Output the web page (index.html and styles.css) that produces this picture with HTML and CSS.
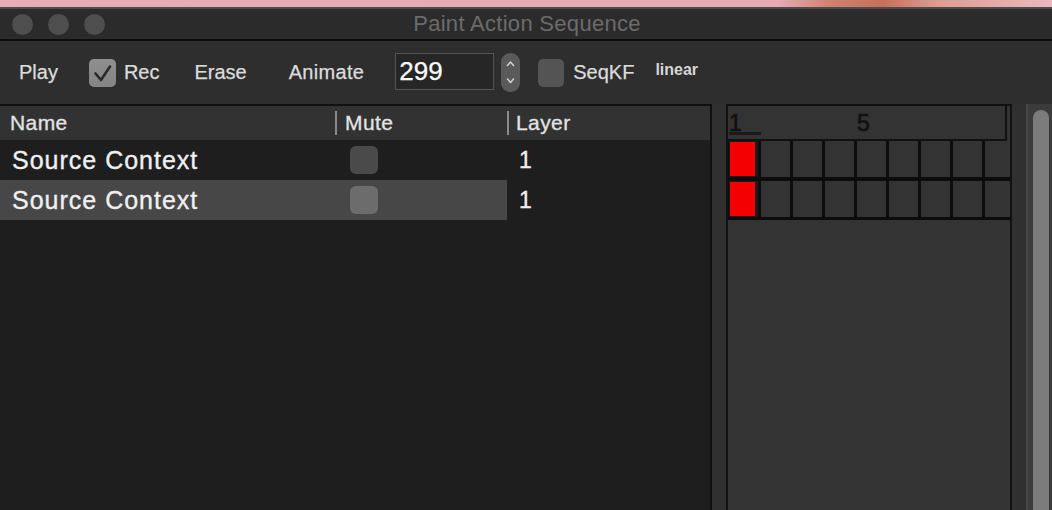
FILE: index.html
```html
<!DOCTYPE html>
<html>
<head>
<meta charset="utf-8">
<title>Paint Action Sequence</title>
<link rel="stylesheet" href="styles.css">
</head>
<body>
<div class="desk"></div>
<div class="window">
  <div class="titlebar">
    <div class="lights"><span class="light"></span><span class="light"></span><span class="light"></span></div>
    <div class="title">Paint Action Sequence</div>
    <div></div>
  </div>
  <div class="toolbar">
    <span class="tb-label play">Play</span>
    <span class="check rec-box"><svg width="27" height="28" viewBox="0 0 27 28"><path d="M6.5 14.5 L12 21 L21 7.5" fill="none" stroke="#2a2a2a" stroke-width="2.6" stroke-linecap="round" stroke-linejoin="round"/></svg></span>
    <span class="tb-label rec">Rec</span>
    <span class="tb-label erase">Erase</span>
    <span class="tb-label animate">Animate</span>
    <div class="numfield">299</div>
    <div class="stepper"><svg width="19" height="39" viewBox="0 0 19 39"><path d="M6.5 12.5 L9.5 9 L12.5 12.5 M6.5 26 L9.5 29.5 L12.5 26" fill="none" stroke="#d8d8d8" stroke-width="1.4" stroke-linecap="round" stroke-linejoin="round"/></svg></div>
    <span class="check seq-box"></span>
    <span class="tb-label seq">SeqKF</span>
    <span class="interp">linear</span>
  </div>
  <div class="main">
    <div class="list">
      <div class="row head">
        <div class="c-name">Name</div>
        <div class="c-mute sep">Mute</div>
        <div class="c-layer sep">Layer</div>
      </div>
      <div class="row item">
        <div class="c-name">Source Context</div>
        <div class="c-mute"><span class="mute-box"></span></div>
        <div class="c-layer">1</div>
      </div>
      <div class="row item sel">
        <div class="c-name">Source Context</div>
        <div class="c-mute"><span class="mute-box"></span></div>
        <div class="c-layer">1</div>
      </div>
    </div>
    <div class="timeline">
      <div class="ruler">
        <span class="tick cur">1</span><span class="tick"></span><span class="tick"></span><span class="tick"></span><span class="tick">5</span><span class="tick"></span><span class="tick"></span><span class="tick"></span>
      </div>
      <div class="frames">
        <span class="f key"></span><span class="f"></span><span class="f"></span><span class="f"></span><span class="f"></span><span class="f"></span><span class="f"></span><span class="f"></span><span class="f"></span>
        <span class="f key"></span><span class="f"></span><span class="f"></span><span class="f"></span><span class="f"></span><span class="f"></span><span class="f"></span><span class="f"></span><span class="f"></span>
      </div>
    </div>
    <div class="scroll"><div class="thumb"></div></div>
  </div>
</div>
</body>
</html>
```

FILE: styles.css
```css
html, body {
  margin: 0;
  padding: 0;
}
body {
  width: 1052px;
  height: 510px;
  overflow: hidden;
  background: #303030;
  font-family: "Liberation Sans", Arial, Helvetica, sans-serif;
}
.desk {
  height: 7px;
  background: linear-gradient(90deg, #e8acb4 0%, #e6aab2 74%, #cf8070 79%, #c86f5c 84%, #dc9c92 89%, #ebb9bd 100%);
}
.window {
  border-top: 2px solid #4c4c4c;
}
.titlebar {
  height: 30px;
  background: #2b2b2b;
  border-bottom: 2px solid #0d0d0d;
  display: grid;
  grid-template-columns: 1fr auto 1fr;
  align-items: center;
}
.lights {
  display: flex;
  gap: 15px;
  padding-left: 12px;
}
.light {
  width: 21px;
  height: 21px;
  border-radius: 50%;
  background: #4e4e4e;
}
.title {
  font-size: 22px;
  color: #6b6b6b;
  letter-spacing: 0.3px;
  padding-left: 2px;
}
.toolbar {
  height: 63px;
  display: flex;
  align-items: center;
  background: #2e2e2e;
  color: #dcdcdc;
  font-size: 20px;
  -webkit-text-stroke: 0.25px currentColor;
}
.tb-label {
  flex: none;
}
.play { margin-left: 19px; }
.check {
  flex: none;
  display: block;
  border-radius: 5px;
}
.rec-box {
  margin-left: 31px;
  width: 27px;
  height: 28px;
  background: linear-gradient(#8f8f8f, #858585);
}
.rec-box svg { display: block; }
.rec { margin-left: 8px; }
.erase { margin-left: 35px; }
.animate { margin-left: 42px; letter-spacing: 0.3px; }
.numfield {
  flex: none;
  margin-left: 31px;
  margin-bottom: 3px;
  width: 99px;
  height: 37px;
  box-sizing: border-box;
  border: 1px solid #545454;
  background: #262626;
  color: #fafafa;
  font-size: 26px;
  line-height: 35px;
  padding-left: 3px;
}
.stepper {
  flex: none;
  margin-left: 7px;
  width: 19px;
  height: 39px;
  border-radius: 9px;
  background: #5a5a5a;
  margin-bottom: 1px;
}
.stepper svg { display: block; }
.seq-box {
  margin-left: 18px;
  width: 26px;
  height: 28px;
  background: #545454;
}
.seq { margin-left: 9px; }
.interp {
  margin-left: 21px;
  margin-bottom: 5px;
  font-size: 16px;
  font-weight: bold;
  color: #d6d6d6;
  -webkit-text-stroke: 0;
}
.main {
  display: flex;
  height: 406px;
}
.list {
  flex: none;
  width: 712px;
  box-sizing: border-box;
  border-top: 2px solid #111;
  border-right: 2px solid #111;
  background: #1e1e1e;
}
.row {
  display: flex;
}
.row > div {
  display: flex;
  align-items: center;
}
.c-name { width: 335px; flex: none; }
.c-mute { width: 172px; flex: none; }
.c-layer { flex: 1; }
.head {
  height: 34px;
  background: #323232;
  font-size: 21px;
  color: #e4e4e4;
  letter-spacing: 0.4px;
  -webkit-text-stroke: 0.3px currentColor;
}
.head .c-name { padding-left: 10px; box-sizing: border-box; }
.sep::before {
  content: "";
  flex: none;
  width: 2px;
  height: 24px;
  background: #8a8a8a;
  margin-right: 8px;
}
.head .c-layer::before { margin-right: 7px; }
.item {
  height: 40px;
  font-size: 25px;
  letter-spacing: 1px;
  color: #f0f0f0;
  -webkit-text-stroke: 0.35px currentColor;
}
.item .c-name { padding-left: 12px; box-sizing: border-box; }
.item .c-layer { padding-left: 12px; font-size: 23px; letter-spacing: 0; }
.mute-box {
  margin-left: 15px;
  width: 28px;
  height: 28px;
  border-radius: 6px;
  background: #4a4a4a;
}
.sel .c-name, .sel .c-mute {
  background: #474747;
}
.sel .mute-box {
  background: #6c6c6c;
}
.timeline {
  flex: none;
  margin-left: 14px;
  width: 286px;
  box-sizing: border-box;
  border: 2px solid #111;
  border-bottom: none;
  background: #333;
  overflow: hidden;
}
.ruler {
  display: flex;
  height: 35px;
  width: 279px;
  box-sizing: border-box;
  border-right: 2px solid #111;
  border-bottom: 2px solid #111;
  padding-left: 1px;
}
.tick {
  flex: none;
  width: 32px;
  height: 33px;
  box-sizing: border-box;
  padding-top: 2px;
  font-size: 23px;
  line-height: 31px;
  color: #111;
  -webkit-text-stroke: 0.7px #111;
}
.tick.cur {
  background: linear-gradient(#1b1b1b, #1b1b1b) no-repeat 0 26px / 100% 3px;
}
.frames {
  display: grid;
  grid-template-columns: repeat(9, 29px);
  grid-auto-rows: 36px;
  column-gap: 3px;
  row-gap: 4px;
  padding: 0 0 3px 1px;
  background: #0c0c0c;
}
.f {
  background: #333;
}
.f.key {
  background: #f40000;
  box-shadow: inset 1px 1px 0 #1a1a1a, inset -3px -1px 0 #1a1a1a;
}
.scroll {
  flex: none;
  margin-left: 14px;
  width: 26px;
  box-sizing: border-box;
  border-left: 2px solid #474747;
  background: #3b3b3b;
  overflow: hidden;
}
.thumb {
  margin: 6px 0 0 5px;
  width: 16px;
  height: 600px;
  border-radius: 8px;
  background: #7b7b7b;
}
```
